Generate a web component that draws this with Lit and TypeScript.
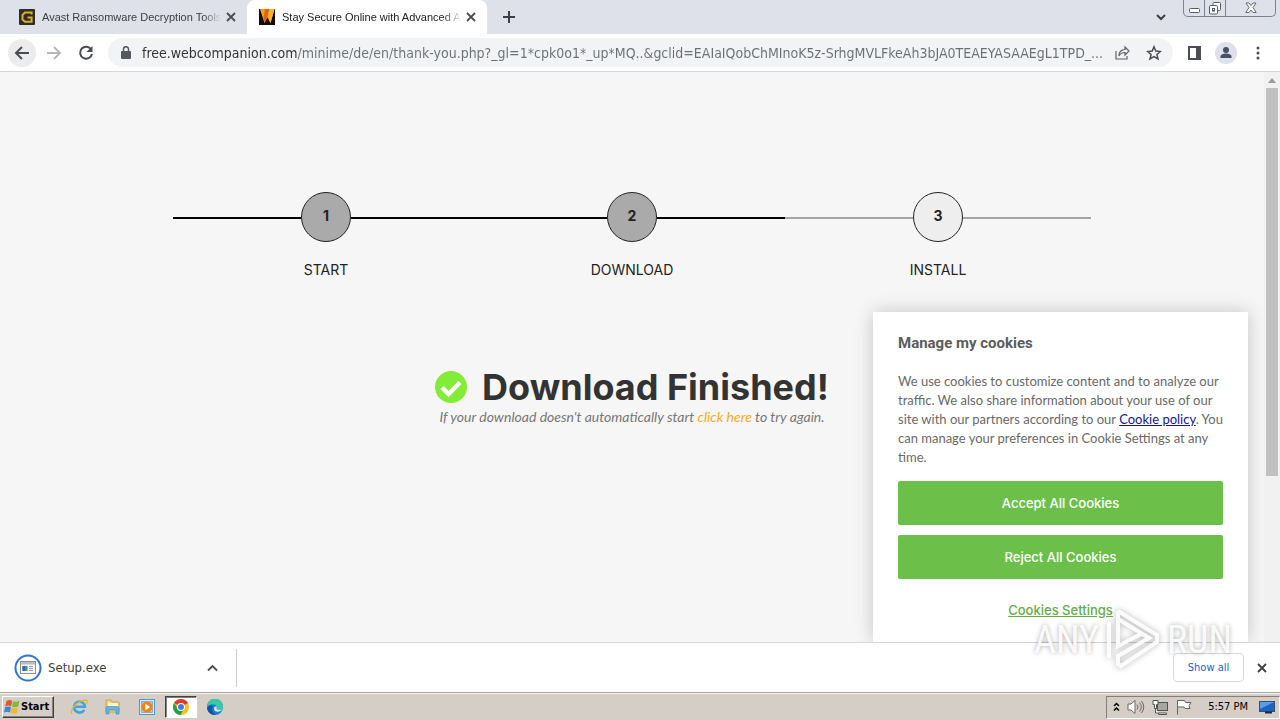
import { LitElement, html, css, svg, nothing } from "lit";
import { customElement, property, state } from "lit/decorators.js";
import { classMap } from "lit/directives/class-map.js";

const closeIcon = svg`<svg width="10" height="10" viewBox="0 0 10 10" aria-hidden="true">
  <path d="M1 1l8 8M9 1l-8 8" stroke="currentColor" stroke-width="1.8" fill="none"/></svg>`;

const reset = css`
  * { box-sizing: border-box; }
  button, input { font: inherit; color: inherit; border: 0; padding: 0; margin: 0; background: none; }
  svg { display: block; flex: none; }
`;

@customElement("tab-strip")
export class TabStrip extends LitElement {
  static styles = [reset, css`
    :host { display: flex; height: 34px; background: #dee1e9; padding-left: 7px; flex: none;
      color: #3c4043; }
    .tab { display: flex; align-items: center; width: 240px; padding: 0 8px 0 12px; gap: 2px; }
    .tab.active { background: #fff; border-radius: 8px 8px 0 0; color: #202124; }
    .pick { display: flex; align-items: center; gap: 7px; flex: 1; min-width: 0; height: 34px; text-align: left;
      font: 11px/16px "Liberation Sans", sans-serif; }
    .title { flex: 1; overflow: hidden; white-space: nowrap;
      mask-image: linear-gradient(to right, #000 90%, transparent); }
    .close, .new, .search { display: grid; place-items: center; width: 16px; height: 34px; }
    .close, .new, .search { color: #4a4d51; }
    .new { width: 44px; }
    .search { margin-left: auto; width: 44px; }
    .frame { display: flex; height: 17px; margin-right: 4px; border: 1px solid #7b8290; border-top: 0;
      border-radius: 0 0 5px 5px; }
    .frame button { display: grid; place-items: center; width: 25px; border-right: 1px solid #7b8290; }
    .frame button:first-child { width: 21px; }
    .frame button:nth-child(2) { width: 21px; }
    .frame button:last-child { border: 0; width: 49px; }
  `];

  @state() private active = 1;

  private tabs = [
    { title: "Avast Ransomware Decryption Tools", icon: svg`<svg width="16" height="16" viewBox="0 0 16 16"><rect width="16" height="16" rx="1" fill="#302d24"/><path d="M12.6 5.4V3.500H6L3.500 6v4.500L6 12.800h6.600V8.500H8.500" fill="none" stroke="#d9ae2f" stroke-width="2"/></svg>` },
    { title: "Stay Secure Online with Advanced A", icon: svg`<svg width="16" height="16" viewBox="0 0 16 16"><rect width="16" height="16" fill="#120c08"/><path d="M1 0h14.500L11.500 14 8.500 8 5.500 14z" fill="#f9a11b"/><path d="M6 0h4.500L8.500 8 5.500 14 4.500 9z" fill="#e2641b"/><path d="M10.500 0H15.500L11.500 14 8.500 8z" fill="#fbb52c"/></svg>` },
  ];

  render() {
    return html`
      ${this.tabs.map((t, i) => html`
        <div class=${classMap({ tab: true, active: i === this.active })}>
          <button class="pick" @click=${() => (this.active = i)}>${t.icon}<span class="title">${t.title}</span></button>
          <button class="close" aria-label="Close tab">${closeIcon}</button>
        </div>`)}
      <button class="new" aria-label="New tab"><svg width="14" height="14" viewBox="0 0 14 14"><path d="M7 1v12M1 7h12" stroke="#3c4043" stroke-width="2"/></svg></button>
      <button class="search" aria-label="Search tabs"><svg width="10" height="7" viewBox="0 0 10 7"><path d="M1 1l4 4 4-4" fill="none" stroke="#3c4043" stroke-width="2"/></svg></button>
      <div class="frame">
        <button aria-label="Minimize"><svg width="11" height="16" viewBox="0 0 11 16"><rect x=".5" y="8.500" width="10" height="4" rx="1" fill="#fff" stroke="#555b66"/></svg></button>
        <button aria-label="Restore"><svg width="12" height="16" viewBox="0 0 12 16"><rect x="4" y="2.500" width="7.500" height="8" rx="1" fill="#fff" stroke="#555b66"/><rect x=".5" y="5.500" width="8" height="8.500" rx="1" fill="#fff" stroke="#555b66"/><rect x="3.500" y="8.500" width="2" height="2.500" fill="none" stroke="#555b66"/></svg></button>
        <button aria-label="Close window"><svg width="12" height="16" viewBox="0 0 12 16"><path d="M1 3h3l2 2.500L8 3h3L8 7.500l3.200 5H8L6 10l-2 2.500H.8L4 7.500z" fill="#fff" stroke="#555b66" stroke-width=".9"/></svg></button>
      </div>`;
  }
}

@customElement("nav-bar")
export class NavBar extends LitElement {
  static styles = [reset, css`
    :host { display: flex; align-items: center; flex: none; height: 38px; padding: 0 8px; background: #fff;
      border-bottom: 1px solid #d5d7da; color: #55585d; }
    .round { display: grid; place-items: center; width: 28px; height: 28px; border-radius: 50%; }
    .round.on { background: #ececee; }
    .nav { display: flex; gap: 4px; margin-right: 8px; }
    .box { display: flex; align-items: center; flex: 1; min-width: 0; height: 29px; padding: 0 3px 0 13px;
      border-radius: 15px; background: #f1f3f4; }
    .url { flex: 1; min-width: 0; height: 28px; margin: 0 4px 0 11px; outline: 0; text-overflow: clip;
      font: 14px/28px "DejaVu Sans Condensed", "Noto Sans", sans-serif; color: transparent;
      background: linear-gradient(to right, #303134 155px, #6b6f74 155px); background-clip: text; }
    .small { display: grid; place-items: center; width: 32px; height: 28px; }
    .tools { display: flex; margin-left: 5px; margin-right: -2px; }
  `];

  render() {
    return html`
      <div class="nav">
        <button class="round on" aria-label="Back"><svg width="16" height="14" viewBox="0 0 16 14"><path d="M15 7H2M8 1L2 7l6 6" fill="none" stroke="#4a4d51" stroke-width="2"/></svg></button>
        <button class="round" aria-label="Forward"><svg width="16" height="14" viewBox="0 0 16 14"><path d="M1 7h13M8 1l6 6-6 6" fill="none" stroke="#b4b6b9" stroke-width="1.800"/></svg></button>
        <button class="round" aria-label="Reload"><svg width="16" height="16" viewBox="0 0 16 16"><path d="M13.300 4.600A6 6 0 1 0 14 9" fill="none" stroke="#4a4d51" stroke-width="2"/><path d="M14.500 1v6h-6z" fill="#4a4d51"/></svg></button>
      </div>
      <div class="box">
        <svg width="10" height="14" viewBox="0 0 10 14" aria-hidden="true"><rect y="5" width="10" height="8" rx="1" fill="#55585d"/><path d="M2.500 5V3.200a2.500 2.500 0 0 1 5 0V5" fill="none" stroke="#55585d" stroke-width="1.500"/></svg>
        <input class="url" type="text" aria-label="Address and search bar" spellcheck="false"
          .value=${"free.webcompanion.com/minime/de/en/thank-you.php?_gl=1*cpk0o1*_up*MQ..&gclid=EAIaIQobChMInoK5z-SrhgMVLFkeAh3bJA0TEAEYASAAEgL1TPD_..."}>
        <button class="small" aria-label="Share"><svg width="15" height="15" viewBox="0 0 15 15"><path d="M1 6v8h11v-3" fill="none" stroke="#5f6368" stroke-width="1.200"/><path d="M4 11c0-4 2-6.500 6-6.500V2l4 4-4 4V7.500C7 7.500 5 9 4 11z" fill="none" stroke="#5f6368" stroke-width="1.200"/></svg></button>
        <button class="small" aria-label="Bookmark this page"><svg width="16" height="16" viewBox="0 0 16 16"><path d="M8 1.800l1.800 4.300 4.600.4-3.500 3 1.100 4.500L8 11.600 4 14l1.100-4.500-3.500-3 4.600-.4z" fill="none" stroke="#4a4d51" stroke-width="1.500"/></svg></button>
      </div>
      <div class="tools">
        <button class="small" aria-label="Side panel"><svg width="13" height="14" viewBox="0 0 13 14"><path d="M1 1h11v12H1z" fill="none" stroke="#4a4d51" stroke-width="2"/><path d="M8 1h4v12H8z" fill="#4a4d51"/></svg></button>
        <button class="small" aria-label="Profile"><svg width="22" height="22" viewBox="0 0 22 22"><circle cx="11" cy="11" r="11" fill="#dee1e9"/><circle cx="11" cy="8" r="3" fill="#46506a"/><path d="M5.500 16v-1.500c0-2 3-3 5.500-3s5.500 1 5.500 3V16z" fill="#46506a"/></svg></button>
        <button class="small" aria-label="Menu"><svg width="4" height="14" viewBox="0 0 4 14" fill="#4a4d51"><circle cx="2" cy="2" r="1.500"/><circle cx="2" cy="7" r="1.500"/><circle cx="2" cy="12" r="1.500"/></svg></button>
      </div>`;
  }
}

@customElement("step-item")
export class StepItem extends LitElement {
  @property({ type: Number }) number = 1;
  @property() label = "";
  @property({ type: Boolean, reflect: true }) done = false;

  static styles = css`
    :host { flex: 1; --line: #a5a5a5; --fill: #eee; }
    :host([done]) { --line: #000; --fill: #aaa; }
    .row { display: flex; height: 50px; }
    .line { flex: 1; align-self: flex-end; height: 23px; border-top: 2px solid var(--line); }
    .dot { display: grid; place-items: center; width: 50px; height: 50px; box-sizing: border-box; padding-bottom: 2px;
      border: 1px solid #222; border-radius: 50%; background: var(--fill); font: 700 14px/20px Inter, sans-serif; color: #222; }
    .label { margin-top: 18px; text-align: center; font: 14px/20px Inter, sans-serif; color: #222; }
  `;

  render() {
    return html`
      <div class="row"><span class="line"></span><span class="dot">${this.number}</span><span class="line"></span></div>
      <div class="label">${this.label}</div>`;
  }
}

@customElement("cookie-card")
export class CookieCard extends LitElement {
  @state() private open = true;

  static styles = [reset, css`
    :host { display: block; width: 375px; max-width: 100%; }
    .card { display: flex; flex-direction: column; padding: 20px 25px 11px; background: #fff; color: #696969;
      box-shadow: 0 0 18px rgba(0, 0, 0, .2); font: 13px/19px Lato, sans-serif; }
    h2 { margin: 0 0 18px; font: 700 15px/22px Roboto, sans-serif; color: #5c5c5c; }
    p { margin: 0 0 14px; }
    a { color: #1414a0; }
    .main { height: 44px; margin-bottom: 10px; border-radius: 2px; background: #6cc04a; color: #fff;
      font: 500 13px/20px Inter, sans-serif; }
    .settings { height: 42px; text-decoration: underline; color: #63ad45; font: 500 13px/20px Inter, sans-serif; }
  `];

  render() {
    const hide = () => (this.open = false);
    return this.open ? html`
      <section class="card" aria-label="Cookie consent">
        <h2>Manage my cookies</h2>
        <p>We use cookies to customize content and to analyze our traffic. We also share information about your use of our site with our partners according to our <a href="#policy">Cookie policy</a>. You can manage your preferences in Cookie Settings at any time.</p>
        <button class="main" @click=${hide}>Accept All Cookies</button>
        <button class="main" @click=${hide}>Reject All Cookies</button>
        <button class="settings">Cookies Settings</button>
      </section>` : nothing;
  }
}

@customElement("download-shelf")
export class DownloadShelf extends LitElement {
  static styles = [reset, css`
    :host { display: flex; align-items: center; flex: none; height: 50px; border-top: 1px solid #d5d5d5;
      padding-right: 12px; background: #fff; font: 13px/16px "DejaVu Sans Condensed", "Noto Sans", sans-serif; color: #3c4043; }
    .item { display: flex; align-items: center; width: 237px; height: 38px; padding: 0 16px 0 14px; border-right: 1px solid #c9cbce; }
    .file { display: flex; align-items: center; gap: 6px; flex: 1; height: 38px; text-align: left; }
    .more { display: grid; place-items: center; width: 16px; height: 38px; }
    .all { width: 71px; height: 29px; margin-left: auto; border: 1px solid #d5d8dc; border-radius: 4px; color: #1a62d0; font-size: 11px; }
    .close { display: grid; place-items: center; width: 12px; height: 38px; margin-left: 12px; }
  `];

  render() {
    return html`
      <div class="item">
        <button class="file">
          <svg width="28" height="28" viewBox="0 0 28 28" aria-hidden="true"><circle cx="14" cy="14" r="12.500" fill="#fff" stroke="#2f74d0" stroke-width="2"/><rect x="6.500" y="7.500" width="15" height="12" fill="#f4f6f7" stroke="#8a8f94"/><path d="M7 8h14v2.500H7z" fill="#b9bfc5"/><path d="M8.500 12h5v5h-5z" fill="#3b8f8d"/><path d="M8.500 12h2.500v5H8.500z" fill="#3567a8"/><path d="M15 12.500h4M15 14.500h4M15 16.500h4" stroke="#999"/></svg>
          <span>Setup.exe</span>
        </button>
        <button class="more" aria-label="Download options"><svg width="11" height="8" viewBox="0 0 11 8"><path d="M1 6.500l4.500-4.500L10 6.500" fill="none" stroke="#4a4d51" stroke-width="1.800"/></svg></button>
      </div>
      <button class="all">Show all</button>
      <button class="close" aria-label="Close downloads bar">${closeIcon}</button>`;
  }
}

@customElement("task-bar")
export class TaskBar extends LitElement {
  static styles = [reset, css`
    :host { display: flex; align-items: center; flex: none; height: 28px; background: #d4cec6; padding: 1px 0 0 2px;
      border-top: 1px solid #aaa59d; box-shadow: inset 0 1px #f6f4f1;
      font: 11px/16px "DejaVu Sans Condensed", "Noto Sans", sans-serif; color: #000; }
    .start { display: flex; align-items: center; gap: 1px; width: 52px; height: 22px; padding-left: 1px; font-weight: 700;
      border: 1px solid; border-color: #fff #404040 #404040 #fff; box-shadow: inset -1px -1px #848078; }
    .apps { display: flex; margin-left: 9px; gap: 2px; }
    .app { display: grid; place-items: center; width: 32px; height: 22px; }
    .app.on { background: #fff; border: 1px solid; border-color: #404040 #fff #fff #404040; box-shadow: inset 1px 1px #848078; }
    .tray { display: flex; align-items: center; gap: 7px; height: 23px; margin-left: auto; padding: 0 4px 0 6px;
      border: 1px solid; border-color: #848078 #fff #fff #848078; }
    .time { margin: 0 4px 0 8px; }
  `];

  private apps = [
    { name: "Internet Explorer", icon: svg`<svg width="18" height="18" viewBox="0 0 18 18"><path d="M14.200 12A5.500 5.500 0 1 1 15 8.800H5.500" fill="none" stroke="#3ea5e4" stroke-width="2.600"/><path d="M2 16C-1 12 8 2 16 2c2 .5 1 3 0 4" fill="none" stroke="#e8b730" stroke-width="1.300"/></svg>` },
    { name: "Explorer", icon: svg`<svg width="18" height="18" viewBox="0 0 18 18"><path d="M2 2h5l1 2h7v10H2z" fill="#eed67a" stroke="#b59a48" stroke-width=".7"/><path d="M4 5h10v4H4z" fill="#fff7d4"/><path d="M2 16V10q0-1.500 2-1.500h9q2 0 2 1.500v6h-3v-4H5v4z" fill="#6ab3dc" stroke="#3a86b5" stroke-width=".6"/></svg>` },
    { name: "Media Player", icon: svg`<svg width="16" height="16" viewBox="0 0 16 16"><rect x=".5" y=".5" width="15" height="15" fill="#d9ebf7" stroke="#5796c8"/><rect x="2.500" y="2.500" width="11" height="11" fill="#a9cde8" stroke="#5796c8" stroke-width=".6"/><circle cx="8" cy="8" r="5.500" fill="#f38413"/><path d="M6.300 4.800L11.200 8l-4.900 3.200z" fill="#fff"/></svg>` },
    { name: "Chrome", on: true, icon: svg`<svg width="16" height="16" viewBox="0 0 16 16"><circle cx="8" cy="8" r="8" fill="#fbc116"/><path d="M8 8L1.100 4A8 8 0 0 1 14.900 4z" fill="#e33b2e"/><path d="M1.100 4A8 8 0 0 0 7.500 16L11 9.800 8 8 4.500 9.800z" fill="#24a148"/><circle cx="8" cy="8" r="4" fill="#fff"/><circle cx="8" cy="8" r="3" fill="#3f7de8"/></svg>` },
    { name: "Edge", icon: svg`<svg width="16" height="16" viewBox="0 0 16 16"><circle cx="8" cy="8" r="8" fill="#1b7fd0"/><path d="M0 8A8 8 0 0 1 16 7c.3 3-2 4-4.500 3.800C8.500 10.500 10 9 9.800 7.800 9 4.500 3 4.500 0 8z" fill="#3cc6a5"/><path d="M6 7c-2 3-.5 7 3 8.900-5 .3-8.500-2.500-9-7.400C2 6.300 4.500 6 6 7z" fill="#1554a3"/><path d="M9.800 7.800C9.900 9 8.500 10.400 11.500 10.800c1.500.2 3-.1 3.800-.8-2 4-8.300 3.500-8.300-.5 0-1.300 1-2.300 2.800-1.700z" fill="#d4e9f3"/></svg>` },
  ];

  render() {
    return html`
      <button class="start">
        <svg width="16" height="16" viewBox="0 0 16 16" aria-hidden="true"><path d="M2.500 2Q5 0 8.200 1.800L7.200 7.200Q4 5.800 1.200 7.500z" fill="#e4572c"/><path d="M9 2.300q3.500 1.200 6.500-.8L14.300 7.200Q11 9 8 7.500z" fill="#7fb83a"/><path d="M1.100 8.300Q4 6.800 7 8L6 13.500Q3 12 0 13.800z" fill="#3c86d6"/><path d="M7.800 8.300q3 1.700 6.300 0L13 14q-3 1.600-6.200-.2z" fill="#f2b928"/></svg>
        <span>Start</span>
      </button>
      <div class="apps">${this.apps.map((a) => html`
        <button class=${classMap({ app: true, on: !!a.on })} aria-label=${a.name}>${a.icon}</button>`)}</div>
      <div class="tray">
        <svg width="7" height="10" viewBox="0 0 7 10"><path d="M1 4l2.500-2.500L6 4M1 8.500L3.500 6 6 8.500" fill="none" stroke="#000" stroke-width="1.500"/></svg>
        <svg width="18" height="16" viewBox="0 0 18 16" fill="#fff" stroke="#6a6762"><path d="M1 5h3l4-3.500v13L4 11H1z"/><path d="M10 5.500q2 2.500 0 5M12.500 3.500q3.500 4.500 0 9M14.500 2q4.500 6 0 12" fill="none"/></svg>
        <svg width="17" height="16" viewBox="0 0 17 16" fill="#fff" stroke="#55524e"><rect x="5.500" y="3.500" width="10" height="8" fill="#a8a6a2"/><path d="M1 1.500h5v4H4.500v4h-2v-4H1zM6.500 14h8v1.500h-8zM3.500 10v4h3"/></svg>
        <svg width="17" height="16" viewBox="0 0 17 16" fill="#fff" stroke="#6a6762"><path d="M1.500 1v14.500M1.500 1.500h7l1 2h5.500l-2 3 1 3H9l-1-1.500H1.500z"/></svg>
        <time class="time">5:57 PM</time>
        <svg width="16" height="14" viewBox="0 0 16 14"><rect x=".5" y="1.500" width="15" height="10" fill="#1f62c4" stroke="#33506e"/><path d="M1 2h14L1 9z" fill="#5b9be8"/><path d="M6 12.500h7" stroke="#1b2a3c" stroke-width="2"/></svg>
      </div>`;
  }
}

@customElement("app-root")
export class AppRoot extends LitElement {
  static styles = [reset, css`
    :host { display: flex; flex-direction: column; position: relative; height: 100vh; overflow: hidden; background: #fff; }
    .view { display: flex; flex: 1; min-height: 0; background: #f6f6f6; }
    .page { position: relative; flex: 1; min-width: 0; padding: 120px 24px 0; overflow: hidden; }
    .steps { display: flex; max-width: 918px; margin: 0 auto; }
    .done { display: flex; justify-content: center; align-items: center; gap: 15px; margin: 86px 0 0;
      font: 700 36px/42px Inter, sans-serif; color: #333; }
    .hint { margin: 0; text-align: center; font: italic 14px/18px Lato, sans-serif; color: #777; }
    .hint a { color: #f8ab20; text-decoration: none; }
    .cookies { position: absolute; right: 16px; bottom: 0; }
    .scroll { display: flex; flex-direction: column; align-items: center; flex: none; width: 16px; background: #f1f1f1; }
    .up { display: grid; place-items: center; width: 16px; height: 16px; }
    .thumb { width: 12px; height: 68%; background: #c1c1c1; }
    .mark { position: absolute; right: 48px; bottom: 46px; pointer-events: none; display: flex; align-items: center; gap: 5px;
      font: 38px/48px "Liberation Sans Narrow", "Roboto Condensed", "Liberation Sans", sans-serif;
      color: rgba(255, 255, 255, .9); text-shadow: 0 0 5px rgba(0, 0, 0, .32); }
    .mark svg { filter: drop-shadow(0 0 3px rgba(0, 0, 0, .32)); }
  `];

  render() {
    return html`
      <tab-strip></tab-strip>
      <nav-bar></nav-bar>
      <div class="view">
        <main class="page">
          <div class="steps">
            <step-item number="1" label="START" done></step-item>
            <step-item number="2" label="DOWNLOAD" done></step-item>
            <step-item number="3" label="INSTALL"></step-item>
          </div>
          <h1 class="done">
            <svg width="32" height="32" viewBox="0 0 32 32" aria-hidden="true"><circle cx="16" cy="16" r="16" fill="#82ec36"/><path d="M7 16.500l6.500 6.500L25 11.500" fill="none" stroke="#fff" stroke-width="4.500"/></svg>
            <span>Download Finished!</span>
          </h1>
          <p class="hint">If your download doesn't automatically start <a href="#download">click here</a> to try again.</p>
          <cookie-card class="cookies"></cookie-card>
        </main>
        <div class="scroll" aria-hidden="true">
          <span class="up"><svg width="8" height="5" viewBox="0 0 8 5"><path d="M4 0l4 5H0z" fill="#9a9a9a"/></svg></span>
          <span class="thumb"></span>
        </div>
      </div>
      <download-shelf></download-shelf>
      <task-bar></task-bar>
      <div class="mark" aria-hidden="true">
        <span>ANY</span>
        <svg width="58" height="68" viewBox="0 0 58 68"><path d="M5 16v36M14 5v35l25-13M14 5l39 24v7L17 60l-3-2v-8l31-18L14 13" fill="none" stroke="#fff" stroke-opacity=".9" stroke-width="4"/></svg>
        <span>RUN</span>
      </div>`;
  }
}
